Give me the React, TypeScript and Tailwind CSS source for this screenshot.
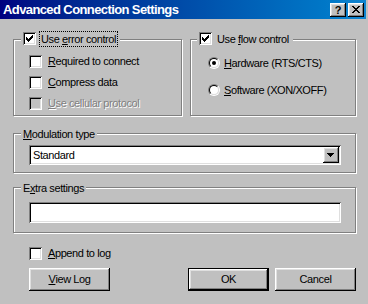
const raised =
  "shadow-[inset_-1px_-1px_0_#000000,inset_1px_1px_0_#ffffff,inset_-2px_-2px_0_#808080,inset_2px_2px_0_#dfdfdf]";
const sunken =
  "shadow-[inset_1px_1px_0_#808080,inset_-1px_-1px_0_#ffffff,inset_2px_2px_0_#000000,inset_-2px_-2px_0_#dfdfdf]";
const etched = "border border-[#808080] shadow-[inset_1px_1px_0_#ffffff,1px_1px_0_#ffffff]";
const disabledText = "text-[#808080] [text-shadow:1px_1px_0_#ffffff]";

function Check({ checked, disabled }: { checked?: boolean; disabled?: boolean }) {
  return (
    <div className={`relative h-[13px] w-[13px] shrink-0 ${disabled ? "bg-[#c0c0c0]" : "bg-white"} ${sunken}`}>
      {checked && (
        <svg className="absolute left-[3px] top-[3px]" width="7" height="7" viewBox="0 0 7 7" shapeRendering="crispEdges">
          <path
            fill="#000"
            d="M6 0h1v1h-1z M5 1h2v1h-2z M0 2h1v1H0z M4 2h3v1H4z M0 3h2v1H0z M3 3h3v1H3z M0 4h5v1H0z M1 5h3v1H1z M2 6h1v1H2z"
          />
        </svg>
      )}
    </div>
  );
}

function Radio({ on }: { on?: boolean }) {
  return (
    <div className="h-[12px] w-[12px] shrink-0 rounded-full border border-t-[#808080] border-l-[#808080] border-r-white border-b-white">
      <div className="flex h-full w-full items-center justify-center rounded-full border border-t-black border-l-black border-r-[#dfdfdf] border-b-[#dfdfdf] bg-white">
        {on && <div className="h-[4px] w-[4px] rounded-full bg-black" />}
      </div>
    </div>
  );
}

function CheckRow({ label, checked, disabled }: { label: React.ReactNode; checked?: boolean; disabled?: boolean }) {
  return (
    <div className="flex h-[13px] items-center">
      <Check checked={checked} disabled={disabled} />
      <span className={`ml-[6px] whitespace-nowrap ${disabled ? disabledText : ""}`}>{label}</span>
    </div>
  );
}

function RadioRow({ label, on }: { label: React.ReactNode; on?: boolean }) {
  return (
    <div className="flex h-[12px] items-center">
      <Radio on={on} />
      <span className="ml-[4px] whitespace-nowrap">{label}</span>
    </div>
  );
}

function Btn({ children, def }: { children: React.ReactNode; def?: boolean }) {
  return (
    <div
      className={
        def
          ? "flex h-[23px] w-[81px] items-center justify-center border border-black shadow-[inset_-1px_-1px_0_#000000,inset_1px_1px_0_#ffffff,inset_-2px_-2px_0_#808080,inset_2px_2px_0_#dfdfdf]"
          : `flex h-[23px] w-[81px] items-center justify-center ${raised}`
      }
    >
      {children}
    </div>
  );
}

export default function App() {
  return (
    <div className="h-[304px] w-[368px] overflow-hidden bg-[#c0c0c0] font-['Liberation_Sans',Arial,sans-serif] text-[11px] leading-[13px] tracking-[-0.4px] text-black">
      {/* Title bar */}
      <div className="flex h-[19px] w-[366px] items-start bg-linear-to-r from-[#000080] to-[#1084d0] pr-[2px]">
        <span className="ml-[3px] whitespace-nowrap text-[13px] font-bold leading-[19px] tracking-[-0.6px] text-white">
          Advanced Connection Settings
        </span>
        <div className="ml-auto mt-[3px] flex gap-[2px]">
          <div className={`flex h-[14px] w-[16px] items-center justify-center bg-[#c0c0c0] text-[11px] font-bold leading-none tracking-normal ${raised}`}>
            ?
          </div>
          <div className={`flex h-[14px] w-[16px] items-center justify-center bg-[#c0c0c0] pb-[1px] ${raised}`}>
            <svg width="8" height="7" viewBox="0 0 8 7" shapeRendering="crispEdges">
              <path
                fill="#000"
                d="M0 0h2v1H0z M6 0h2v1H6z M1 1h2v1H1z M5 1h2v1H5z M2 2h4v1H2z M3 3h2v1H3z M2 4h4v1H2z M1 5h2v1H1z M5 5h2v1H5z M0 6h2v1H0z M6 6h2v1H6z"
              />
            </svg>
          </div>
        </div>
      </div>

      <div className="pl-[13px]">
        {/* Error / flow control */}
        <div className="mt-[20px] flex gap-[8px]">
          <div className={`relative h-[77px] w-[169px] pl-[15px] pt-[15px] ${etched}`}>
            <div className="absolute left-[7px] top-[-9px] flex h-[16px] items-start bg-[#c0c0c0] px-[2px]">
              <div className="mt-[1px]">
                <Check checked />
              </div>
              <span className="ml-[3px] h-[16px] whitespace-nowrap border border-dotted border-black px-[1px] leading-[14px]">
                Use <u>e</u>rror control
              </span>
            </div>
            <div className="flex flex-col gap-[8px]">
              <CheckRow label={<><u>R</u>equired to connect</>} />
              <CheckRow label={<><u>C</u>ompress data</>} />
              <CheckRow label={<><u>U</u>se cellular protocol</>} disabled />
            </div>
          </div>

          <div className={`relative h-[77px] w-[166px] pl-[17px] pt-[17px] ${etched}`}>
            <div className="absolute left-[6px] top-[-9px] flex h-[16px] items-start bg-[#c0c0c0] px-[2px]">
              <div className="mt-[1px]">
                <Check checked />
              </div>
              <span className="ml-[3px] h-[16px] whitespace-nowrap border border-transparent px-[1px] leading-[14px]">
                Use <u>f</u>low control
              </span>
            </div>
            <div className="flex flex-col gap-[15px]">
              <RadioRow label={<><u>H</u>ardware (RTS/CTS)</>} on />
              <RadioRow label={<><u>S</u>oftware (XON/XOFF)</>} />
            </div>
          </div>
        </div>

        {/* Modulation type */}
        <div className={`relative mt-[17px] h-[40px] w-[343px] pl-[15px] pt-[11px] ${etched}`}>
          <div className="absolute left-[7px] top-[-6px] bg-[#c0c0c0] px-[2px]">
            <u>M</u>odulation type
          </div>
          <div className={`flex h-[20px] w-[312px] items-center bg-white p-[2px] ${sunken}`}>
            <span className="flex-1 pl-[2px]">Standard</span>
            <div className={`flex h-[16px] w-[16px] items-center justify-center bg-[#c0c0c0] pr-[1px] ${raised}`}>
              <svg width="7" height="4" viewBox="0 0 7 4" shapeRendering="crispEdges">
                <path fill="#000" d="M0 0h7v1H0z M1 1h5v1H1z M2 2h3v1H2z M3 3h1v1H3z" />
              </svg>
            </div>
          </div>
        </div>

        {/* Extra settings */}
        <div className={`relative mt-[14px] h-[46px] w-[343px] pl-[15px] pt-[14px] ${etched}`}>
          <div className="absolute left-[7px] top-[-6px] bg-[#c0c0c0] px-[2px]">
            E<u>x</u>tra settings
          </div>
          <div className={`h-[21px] w-[312px] bg-white ${sunken}`} />
        </div>

        {/* Append to log */}
        <div className="mt-[14px] pl-[16px]">
          <CheckRow label={<><u>A</u>ppend to log</>} />
        </div>

        {/* Buttons */}
        <div className="mt-[8px] flex pl-[16px]">
          <Btn>
            <u>V</u>iew Log
          </Btn>
          <div className="ml-[78px]">
            <Btn def>OK</Btn>
          </div>
          <div className="ml-[6px]">
            <Btn>Cancel</Btn>
          </div>
        </div>
      </div>
    </div>
  );
}
